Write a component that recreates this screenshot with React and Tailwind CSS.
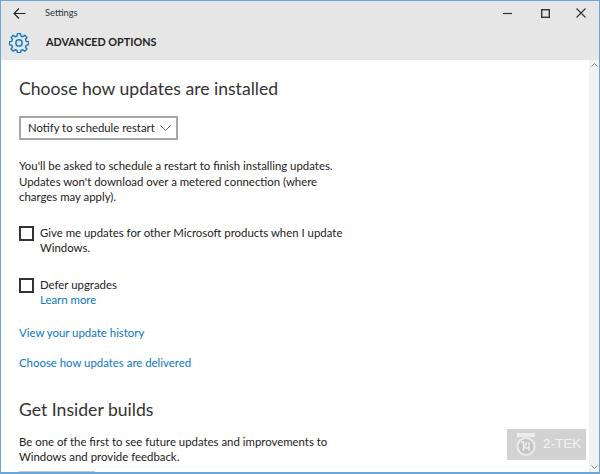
import React from 'react';

const font = "font-['Lato',sans-serif]";

const Checkbox = () => (
  <span className="w-[15px] h-[15px] border-2 border-[#333333] shrink-0 mt-[1px]"></span>
);

const App = () => {
  return (
    <div className={`relative w-[600px] h-[474px] overflow-hidden bg-white border border-[#6ba6d4] border-b-2 flex flex-col ${font}`}>
      {/* Title bar */}
      <div className="bg-[#e6e6e6] h-[59px] shrink-0 flex flex-col">
        <div className="h-[24px] flex items-center">
          <svg className="ml-[12px] w-[13px] h-[13px]" viewBox="0 0 13 13" fill="none" stroke="#222222" strokeWidth="1.1">
            <path d="M1 6.5h11.5M6 1.5l-5 5 5 5" />
          </svg>
          <span className="ml-[19px] text-[9.3px] text-[#333333]">Settings</span>
          <div className="ml-auto flex items-center">
            <svg className="w-[9px] h-[9px] mr-[29px]" viewBox="0 0 9 9" stroke="#333333" strokeWidth="1.2"><path d="M0 4.5h9" /></svg>
            <svg className="w-[9px] h-[9px] mr-[26px]" viewBox="0 0 9 9" fill="none" stroke="#333333" strokeWidth="1.4"><rect x="0.7" y="0.7" width="7.6" height="7.6" /></svg>
            <svg className="w-[10px] h-[10px] mr-[13px]" viewBox="0 0 10 10" stroke="#333333" strokeWidth="1.1"><path d="M0.5 0.5l9 9M9.5 0.5l-9 9" /></svg>
          </div>
        </div>
        <div className="flex items-center h-[35px]">
          <svg className="ml-[8px] w-[20px] h-[20px] shrink-0" viewBox="0 0 24 24" fill="none" stroke="#1479c9" strokeWidth="1.7" strokeLinejoin="round">
            <path d="M10.2 1.5h3.6l.5 2.9 2.2.9 2.4-1.7 2.6 2.6-1.7 2.4.9 2.2 2.8.5v3.6l-2.8.5-.9 2.2 1.7 2.4-2.6 2.6-2.4-1.7-2.2.9-.5 2.8h-3.6l-.5-2.8-2.2-.9-2.4 1.7-2.6-2.6 1.7-2.4-.9-2.2-2.9-.5v-3.6l2.9-.5.9-2.2-1.7-2.4 2.6-2.6 2.4 1.7 2.2-.9z" transform="translate(0 -.8)" />
            <circle cx="12" cy="11.9" r="3.8" />
          </svg>
          <span className="ml-[17px] text-[10.8px] font-bold text-[#222222]">ADVANCED OPTIONS</span>
        </div>
      </div>

      {/* Content */}
      <div className="flex-1 flex min-h-0">
        <div className="flex-1 pl-[18px] overflow-hidden text-[#222222]">
          <h1 className="mt-[17px] text-[17.6px] leading-[24px] font-normal text-[#333333]">Choose how updates are installed</h1>
          <div className="mt-[15px] w-[159px] h-[24px] border-2 border-[#a6a6a6] flex items-center justify-between pl-[7px] pr-[5px] text-[11.3px]">
            <span className="whitespace-nowrap">Notify to schedule restart</span>
            <svg className="w-[11px] h-[6px] shrink-0" viewBox="0 0 11 6" fill="none" stroke="#666666"><path d="M.5.5l5 5 5-5" /></svg>
          </div>
          <p className="mt-[18px] w-[330px] text-[11.4px] leading-[15.5px]">You'll be asked to schedule a restart to finish installing updates. Updates won't download over a metered connection (where charges may apply).</p>
          <div className="mt-[20px] flex gap-[6px]">
            <Checkbox />
            <p className="w-[320px] text-[11.4px] leading-[15.5px]">Give me updates for other Microsoft products when I update Windows.</p>
          </div>
          <div className="mt-[21px] flex gap-[6px]">
            <Checkbox />
            <div className="text-[11.4px] leading-[15.5px]">
              <p>Defer upgrades</p>
              <a className="text-[#0a78c8]">Learn more</a>
            </div>
          </div>
          <a className="block mt-[17px] text-[11.4px] leading-[15.5px] text-[#0a78c8]">View your update history</a>
          <a className="block mt-[15px] text-[11.4px] leading-[15.5px] text-[#0a78c8]">Choose how updates are delivered</a>
          <h2 className="mt-[27px] text-[17.6px] leading-[24px] font-normal text-[#333333]">Get Insider builds</h2>
          <p className="mt-[12px] w-[340px] text-[11.4px] leading-[15.5px]">Be one of the first to see future updates and improvements to Windows and provide feedback.</p>
          <div className="mt-[6px] w-[76px] h-[10px] bg-[#c8c8c8]"></div>
        </div>
        {/* Scrollbar */}
        <div className="w-[10px] bg-[#f2f2f2] flex flex-col items-center justify-between py-[3px]">
          <svg className="w-[7px] h-[4px]" viewBox="0 0 7 4" fill="none" stroke="#888888"><path d="M.5 3.5l3-3 3 3" /></svg>
          <svg className="w-[7px] h-[4px]" viewBox="0 0 7 4" fill="none" stroke="#888888"><path d="M.5.5l3 3 3-3" /></svg>
        </div>
      </div>

      {/* Watermark */}
      <div className="absolute left-[506px] top-[428px] w-[79px] h-[31px] bg-[#d2d2d2] flex items-center pl-[9px] gap-[7px]">
        <svg className="w-[20px] h-[25px]" viewBox="0 0 20 25" fill="none">
          <rect x="1" y="1" width="18" height="4" fill="#ececec" />
          <circle cx="10" cy="14.5" r="9.5" fill="#ececec" />
          <circle cx="10" cy="14.5" r="7.5" fill="#c4c4c4" />
          <path d="M5 10h2.5v9M11 10l-3 6h6M13 10v9" stroke="#ececec" strokeWidth="1.5" />
        </svg>
        <span className="text-[13.5px] text-[#f2f2f2] font-['Liberation_Sans',sans-serif]">2-TEK</span>
      </div>
    </div>
  );
};

export default App;
